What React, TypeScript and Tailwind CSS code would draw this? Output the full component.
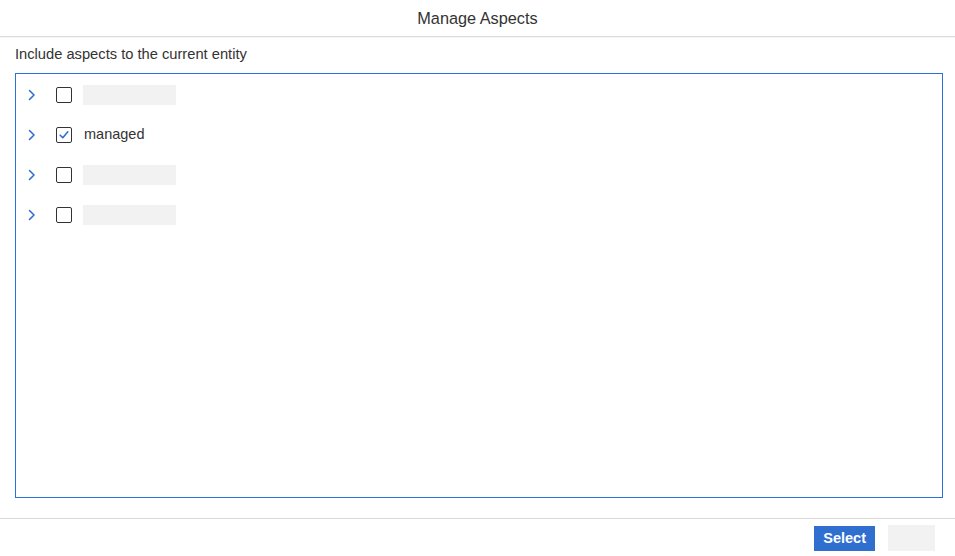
import { useState } from "react";

interface AspectNode {
  id: string;
  label?: string; // empty while loading
  checked: boolean;
}

const initialNodes: AspectNode[] = [
  { id: "a1", checked: false },
  { id: "a2", label: "managed", checked: true },
  { id: "a3", checked: false },
  { id: "a4", checked: false },
];

function Chevron() {
  return (
    <svg width="8" height="12" viewBox="0 0 8 12" fill="none">
      <path
        d="M1.5 1.5 L6 6 L1.5 10.5"
        stroke="#2f6fd6"
        strokeWidth="1.6"
        strokeLinecap="round"
        strokeLinejoin="round"
      />
    </svg>
  );
}

function Checkbox({ checked, onToggle }: { checked: boolean; onToggle: () => void }) {
  return (
    <button
      onClick={onToggle}
      className="w-4 h-4 rounded-[2px] border border-[#333] bg-white flex items-center justify-center"
    >
      {checked && (
        <svg width="12" height="12" viewBox="0 0 12 12" fill="none">
          <path
            d="M2.2 6.2 L4.8 8.8 L9.8 2.8"
            stroke="#2f6fd6"
            strokeWidth="1.6"
            strokeLinecap="round"
            strokeLinejoin="round"
          />
        </svg>
      )}
    </button>
  );
}

export default function App() {
  const [nodes, setNodes] = useState<AspectNode[]>(initialNodes);

  const toggle = (id: string) =>
    setNodes((prev) =>
      prev.map((n) => (n.id === id ? { ...n, checked: !n.checked } : n))
    );

  return (
    <div
      className="w-[955px] h-[556px] bg-white flex flex-col text-[#333]"
      style={{ fontFamily: "'Liberation Sans', Arial, sans-serif" }}
    >
      <div className="h-[37px] shrink-0 flex items-center justify-center border-b border-[#dcdcdc] shadow-[0_1px_1px_rgba(0,0,0,0.04)]">
        <h1 className="text-[16.3px] text-[#333] font-normal">Manage Aspects</h1>
      </div>

      <div className="flex-1 flex flex-col pl-[15px] pr-[12px] pt-[9px] pb-[20px] min-h-0">
        <p className="text-[14.7px] leading-[16px] text-[#333] mb-[11px]">
          Include aspects to the current entity
        </p>
        <div className="flex-1 border border-solid border-[#2b6fdc] pt-[1px]">
          {nodes.map((node) => (
            <div key={node.id} className="h-[40px] flex items-center">
              <div className="w-[40px] flex justify-start pl-[12px]">
                <Chevron />
              </div>
              <Checkbox checked={node.checked} onToggle={() => toggle(node.id)} />
              {node.label ? (
                <span className="ml-[12px] text-[14.5px] text-[#333]">{node.label}</span>
              ) : (
                <div className="ml-[11px] w-[93px] h-[20px] bg-[#f2f2f2]" />
              )}
            </div>
          ))}
        </div>
      </div>

      <div className="h-[38px] shrink-0 border-t border-[#d9d9d9] flex items-center justify-end pr-[20px] gap-[13px]">
        <button className="h-[25px] px-[9px] bg-[#2f6fd0] text-white text-[14.5px] font-bold mt-[2px]">
          Select
        </button>
        <div className="w-[47px] h-[26px] bg-[#f2f2f2]" />
      </div>
    </div>
  );
}
